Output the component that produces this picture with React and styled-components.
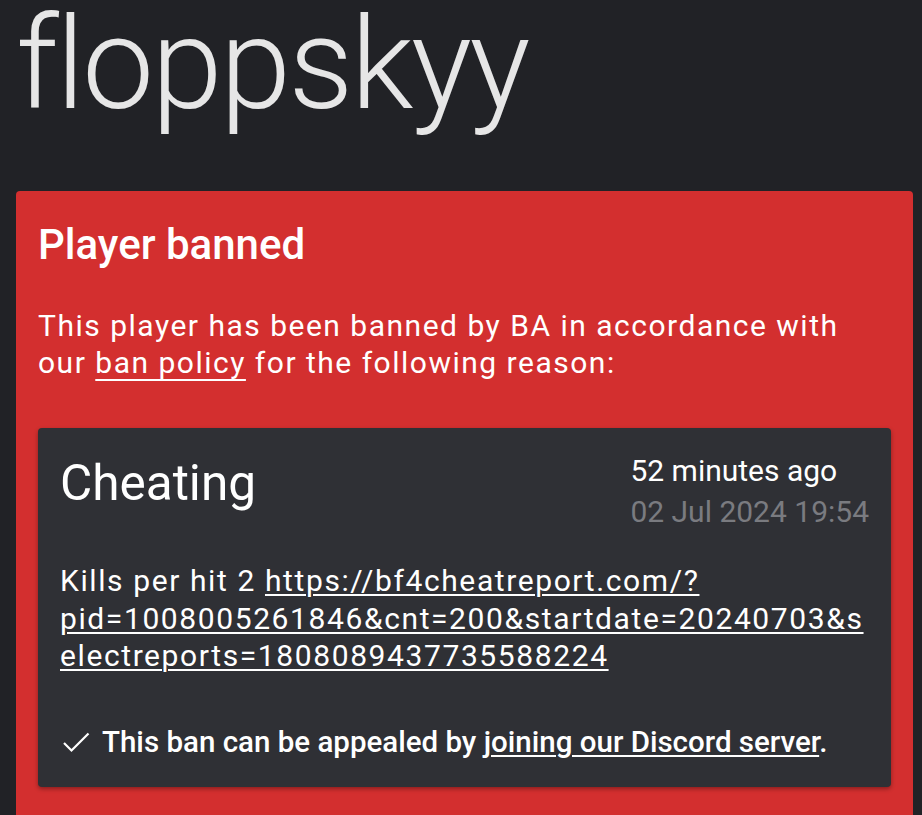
import React from "react";
import styled, { createGlobalStyle } from "styled-components";

const Global = createGlobalStyle`
  html, body { margin: 0; padding: 0; background: #212226; }
  body { font-family: Roboto, "Noto Sans", sans-serif; color: #fff; }
`;

const Page = styled.div`
  padding: 0 9px 0 16px;
  height: 815px;
  box-sizing: border-box;
  overflow: hidden;
`;

const Name = styled.h1`
  margin: 0;
  font-weight: 300;
  font-size: 128px;
  line-height: 128px;
  letter-spacing: -2.5px;
  color: #e6e6e6;
`;

const BanCard = styled.section`
  margin-top: 63px;
  background: #d32f2f;
  border-radius: 4px;
  padding: 29px 22px 40px;
`;

const Title = styled.h2`
  margin: 0;
  font-size: 42px;
  font-weight: 500;
  line-height: 50px;
`;

const Lead = styled.p`
  margin: 37px 0 0;
  font-size: 30px;
  line-height: 37px;
  letter-spacing: 1.5px;
`;

const Link = styled.a`
  color: inherit;
  text-decoration: underline;
  text-decoration-thickness: 2px;
  text-underline-offset: ${(p) => p.$offset || 3}px;
`;

const ReasonCard = styled.div`
  margin-top: 47px;
  background: #2f3035;
  border-radius: 4px;
  padding: 22px 22px 25px;
  box-shadow: 0 2px 4px rgba(0, 0, 0, 0.35);
`;

const Header = styled.div`
  display: flex;
  justify-content: space-between;
  align-items: flex-start;
`;

const Reason = styled.div`
  font-size: 49.5px;
  line-height: 66px;
`;

const When = styled.div`
  font-size: 30px;
  line-height: 41px;
`;

const Stamp = styled.div`
  color: ${(p) => (p.$muted ? "#7a7b80" : "#fff")};
`;

const Detail = styled.p`
  margin: 30px 0 0;
  font-size: 30px;
  line-height: 37.5px;
  letter-spacing: 1.6px;
  overflow-wrap: anywhere;
`;

const Appeal = styled.p`
  margin: 47px 0 0;
  font-size: 29.5px;
  font-weight: 500;
  line-height: 40px;
  display: flex;
  align-items: center;
  gap: 12px;
`;

const CheckIcon = styled.svg`
  margin-left: 2px;
  flex: none;
`;

const Check = () => (
  <CheckIcon width="28" height="22" viewBox="0 0 28 22" fill="none">
    <path d="M2 12 L9.5 19.5 L26.5 2.5" stroke="#fff" strokeWidth="2.2" />
  </CheckIcon>
);

export default function App() {
  return (
    <>
      <Global />
      <Page>
        <Name>floppskyy</Name>
        <BanCard>
          <Title>Player banned</Title>
          <Lead>
            This player has been banned by BA in accordance with our{" "}
            <Link href="#" $offset={6}>ban policy</Link> for the following reason:
          </Lead>
          <ReasonCard>
            <Header>
              <Reason>Cheating</Reason>
              <When>
                <Stamp>52 minutes ago</Stamp>
                <Stamp $muted>02 Jul 2024 19:54</Stamp>
              </When>
            </Header>
            <Detail>
              Kills per hit 2{" "}
              <Link href="#" $offset={3}>
                https://bf4cheatreport.com/?pid=1008005261846&amp;cnt=200&amp;startdate=20240703&amp;selectreports=1808089437735588224
              </Link>
            </Detail>
            <Appeal>
              <Check />
              <span>
                This ban can be appealed by{" "}
                <Link href="#" $offset={3}>joining our Discord server</Link>.
              </span>
            </Appeal>
          </ReasonCard>
        </BanCard>
      </Page>
    </>
  );
}
